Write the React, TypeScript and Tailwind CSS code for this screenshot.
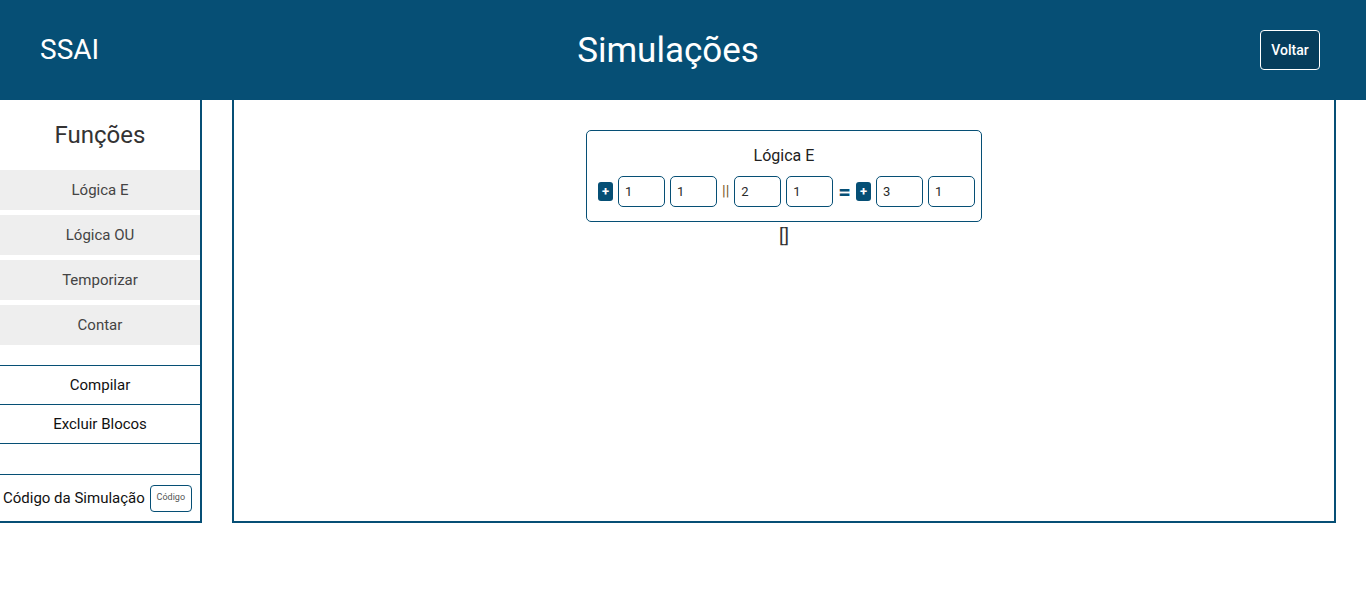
import React from 'react';

const funcoes = ['Lógica E', 'Lógica OU', 'Temporizar', 'Contar'];

function PlusButton() {
  return (
    <button className="flex h-[19px] w-[15px] items-center justify-center rounded-[3px] bg-[#064f75] text-[13px] font-bold leading-none text-white">
      +
    </button>
  );
}

function Campo({ value }: { value: string }) {
  return (
    <div className="flex h-[31px] w-[47px] items-center rounded-[5px] border border-[#064f75] pl-[6px] text-[13px] text-[#2a2a2a]">
      {value}
    </div>
  );
}

function BlocoLogica() {
  return (
    <div className="flex flex-col items-center">
      <div className="flex h-[92px] w-[396px] flex-col items-center rounded-[5px] border border-[#064f75]">
        <div className="mt-[15px] text-[16px] leading-[20px] text-[#222]">Lógica E</div>
        <div className="mt-[10px] ml-[5px] flex items-center gap-[5px]">
          <PlusButton />
          <Campo value="1" />
          <Campo value="1" />
          <span className="text-[15px] text-[#7a5a2a]">||</span>
          <Campo value="2" />
          <Campo value="1" />
          <span className="text-[22px] font-bold leading-none text-[#064f75]">=</span>
          <PlusButton />
          <Campo value="3" />
          <Campo value="1" />
        </div>
      </div>
      <div className="mt-[3px] text-[19px] leading-[22px] text-[#333]">[]</div>
    </div>
  );
}

export default function App() {
  return (
    <div className="min-h-[598px] bg-white" style={{ fontFamily: 'Roboto, "Liberation Sans", sans-serif' }}>
      {/* header */}
      <header className="flex h-[100px] items-center justify-between bg-[#064f75] px-[40px] text-white">
        <div className="w-[185px] text-[28px]">SSAI</div>
        <h1 className="text-[35px] leading-none">Simulações</h1>
        <div className="flex w-[215px] justify-end pr-[6px]">
          <button className="h-[40px] w-[60px] rounded-[4px] border border-white bg-[#053d5c] text-[14px] font-medium">
            Voltar
          </button>
        </div>
      </header>

      <div className="flex gap-[30px]">
        {/* sidebar */}
        <aside className="flex h-[423px] w-[202px] flex-col border-r-2 border-b-2 border-[#064f75]">
          <h2 className="flex h-[70px] items-center justify-center text-[24px] text-[#333]">Funções</h2>
          <div className="flex flex-col gap-[5px]">
            {funcoes.map((f) => (
              <button key={f} className="h-[40px] w-full bg-[#eeeeee] text-[15px] text-[#444]">
                {f}
              </button>
            ))}
          </div>
          <div className="mt-[20px] border-y border-[#064f75]">
            <button className="h-[38px] w-full text-[15px] text-[#111]">Compilar</button>
            <button className="h-[39px] w-full border-t border-[#064f75] text-[15px] text-[#111]">
              Excluir Blocos
            </button>
          </div>
          <div className="mt-[30px] flex flex-1 items-center gap-[5px] border-t border-[#064f75] pl-[3px]">
            <span className="text-[15px] text-[#111]">Código da Simulação</span>
            <button className="h-[27px] w-[42px] rounded-[4px] border border-[#064f75] text-[9px] text-[#555]">
              Código
            </button>
          </div>
        </aside>

        {/* area de simulacao */}
        <main className="h-[423px] w-[1104px] border-x-2 border-b-2 border-[#064f75] pt-[30px]">
          <BlocoLogica />
        </main>
      </div>
    </div>
  );
}
